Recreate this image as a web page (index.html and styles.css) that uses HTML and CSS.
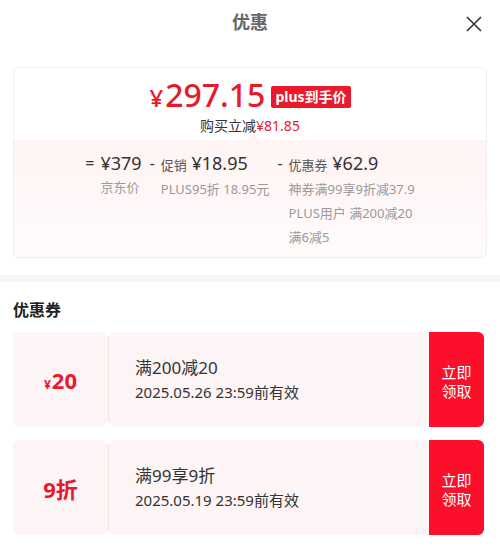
FILE: index.html
```html
<!DOCTYPE html>
<html lang="zh-CN">
<head>
    <meta charset="UTF-8">
    <meta name="viewport" content="width=device-width, initial-scale=1.0">
    <title>优惠</title>
    <link rel="stylesheet" href="styles.css">
</head>
<body>
    <div class="header">
        <h1>优惠</h1>
        <span class="close">
            <svg width="18" height="18" viewBox="0 0 18 18"><path d="M2 2L16 16M16 2L2 16" stroke="#333" stroke-width="1.6" fill="none"/></svg>
        </span>
    </div>

    <div class="card">
        <div class="card-top">
            <div class="price-line">
                <span class="price"><span class="yen">¥</span>297.15</span>
                <span class="badge">plus到手价</span>
            </div>
            <p class="save">购买立减<span class="red">¥81.85</span></p>
        </div>
        <div class="detail">
            <span class="op">=</span>
            <div class="col">
                <p class="val">¥379</p>
                <p class="sub">京东价</p>
            </div>
            <span class="op">-</span>
            <div class="col">
                <p class="val"><span class="lbl">促销</span> ¥18.95</p>
                <p class="sub">PLUS95折 18.95元</p>
            </div>
            <span class="op">-</span>
            <div class="col">
                <p class="val"><span class="lbl">优惠券</span> ¥62.9</p>
                <p class="sub">神券满99享9折减37.9</p>
                <p class="sub">PLUS用户 满200减20</p>
                <p class="sub">满6减5</p>
            </div>
        </div>
    </div>

    <div class="band"></div>

    <h2 class="section-title">优惠券</h2>

    <div class="coupon">
        <div class="stub"><span class="amount"><span class="small">¥</span>20</span></div>
        <div class="info">
            <p class="c-title">满200减20</p>
            <p class="c-date">2025.05.26 23:59前有效</p>
        </div>
        <div class="get">立即<br>领取</div>
    </div>
    <div class="coupon">
        <div class="stub"><span class="amount">9折</span></div>
        <div class="info">
            <p class="c-title">满99享9折</p>
            <p class="c-date">2025.05.19 23:59前有效</p>
        </div>
        <div class="get">立即<br>领取</div>
    </div>
</body>
</html>
```

FILE: styles.css
```css
body {
    margin: 0;
    background-color: #fff;
    font-family: "Noto Sans", "Noto Sans CJK SC", sans-serif;
    color: #333;
}
p {
    margin: 0;
}

.header {
    position: relative;
    height: 48px;
    display: flex;
    justify-content: center;
    align-items: center;
}
.header h1 {
    margin: 0;
    font-size: 18px;
    font-weight: 700;
    color: #666;
    line-height: 24px;
    margin-top: -4px;
}
.close {
    position: absolute;
    right: 17px;
    top: 15px;
    width: 18px;
    height: 18px;
}

.card {
    margin: 19px 13px 0;
    border: 1px solid #f0f0f0;
    border-radius: 6px;
    overflow: hidden;
}
.card-top {
    padding: 8px 0 4px;
    text-align: center;
}
.price-line {
    display: flex;
    justify-content: center;
    align-items: center;
    gap: 6px;
    height: 40px;
}
.price {
    color: #e8192c;
    font-size: 32px;
    font-weight: 500;
    line-height: 40px;
}
.price .yen {
    font-size: 24px;
    margin-right: 2px;
}
.badge {
    background-color: #ea1a2c;
    color: #fff;
    font-size: 14px;
    font-weight: 700;
    line-height: 22px;
    padding: 0 4px;
    border-radius: 2px;
    margin-top: 2px;
}
.save {
    font-size: 14px;
    line-height: 20px;
    color: #333;
}
.red {
    color: #e8192c;
}

.detail {
    position: relative;
    display: flex;
    justify-content: center;
    align-items: flex-start;
    gap: 6px;
    padding: 11px 0 8px;
    background: linear-gradient(#fff4f4, #fffbfb);
}
.detail::before {
    content: "";
    position: absolute;
    top: -6px;
    left: 233px;
    border-left: 6px solid transparent;
    border-right: 6px solid transparent;
    border-bottom: 6px solid #fff4f4;
}
.op {
    font-size: 16px;
    line-height: 24px;
    color: #333;
}
.col .val {
    font-size: 18px;
    line-height: 24px;
    color: #333;
    white-space: nowrap;
}
.lbl {
    font-size: 13px;
    color: #555;
}
.col .sub {
    font-size: 13px;
    line-height: 24px;
    color: #999;
    white-space: nowrap;
}
.col + .op {
    margin-left: 2px;
}

.band {
    height: 7px;
    margin-top: 17px;
    background-color: #f5f6fa;
}

.section-title {
    margin: 16px 13px 10px;
    font-size: 16px;
    font-weight: 700;
    line-height: 24px;
    color: #222;
}

.coupon {
    display: flex;
    height: 95px;
    margin: 0 16px 13px 13px;
    background-color: #fdf4f5;
    border-radius: 6px;
}
.stub {
    position: relative;
    width: 95px;
    display: flex;
    justify-content: center;
    align-items: center;
    border-right: 1px solid #f7e4e7;
}
.stub::before,
.stub::after {
    content: "";
    position: absolute;
    right: -5px;
    width: 9px;
    height: 9px;
    border-radius: 50%;
    background-color: #fff;
}
.stub::before {
    top: -5px;
}
.stub::after {
    bottom: -5px;
}
.amount {
    color: #e8192c;
    font-size: 22px;
    font-weight: 700;
}
.amount .small {
    font-size: 12px;
    margin-right: 1px;
}
.info {
    flex: 1;
    padding-left: 26px;
    display: flex;
    flex-direction: column;
    justify-content: center;
}
.c-title {
    font-size: 17px;
    line-height: 25px;
    color: #333;
}
.c-date {
    font-size: 15px;
    line-height: 25px;
    color: #333;
}
.get {
    width: 55px;
    background-color: #fb0f2a;
    color: #fff;
    font-size: 15px;
    line-height: 19px;
    border-radius: 0 6px 6px 0;
    display: flex;
    align-items: center;
    justify-content: center;
    text-align: center;
    padding-top: 4px;
    box-sizing: border-box;
}
```
